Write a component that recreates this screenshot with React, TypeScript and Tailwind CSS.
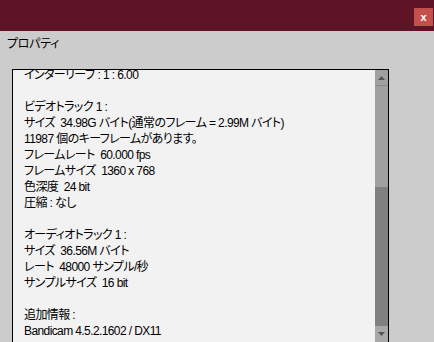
import React from "react";

const lines = [
  "インターリーブ : 1 : 6.00",
  "",
  "ビデオトラック 1 :",
  "サイズ  34.98G バイト(通常のフレーム = 2.99M バイト)",
  "11987 個のキーフレームがあります。",
  "フレームレート  60.000 fps",
  "フレームサイズ  1360 x 768",
  "色深度  24 bit",
  "圧縮 : なし",
  "",
  "オーディオトラック 1 :",
  "サイズ  36.56M バイト",
  "レート  48000 サンプル/秒",
  "サンプルサイズ  16 bit",
  "",
  "追加情報 :",
  "Bandicam 4.5.2.1602 / DX11",
];

export default function App() {
  return (
    <div
      className="w-[434px] h-[342px] overflow-hidden bg-[#cccccc] flex flex-col [font-feature-settings:'palt']"
      style={{ fontFamily: '"Liberation Sans", "Noto Sans CJK JP", sans-serif' }}
    >
      <div className="h-[31px] bg-[#5e1426] flex items-start justify-end pt-[8px] pr-[1px] shrink-0">
        <div className="w-[19px] h-[18px] bg-[#c4504e] flex items-center justify-center text-white text-[11px] font-bold leading-none">
          x
        </div>
      </div>
      <div className="pl-[7px] pt-[5px] h-[38px] text-[12px] leading-[16px] text-black tracking-[-0.3px] shrink-0">
        プロパティ
      </div>
      <div className="ml-[12px] w-[377px] flex-1 border-t border-l border-r border-black bg-[#f2f2f2] flex overflow-hidden">
        <div className="flex-1 overflow-hidden pl-[11px]">
          <div className="-mt-[3px] text-[12px] leading-[16px] text-black whitespace-pre tracking-[-0.6px]">
            {lines.map((l, i) => (
              <div key={i} className="h-[16px]">
                {l}
              </div>
            ))}
          </div>
        </div>
        <div className="w-[13px] flex flex-col bg-[#a0a0a0]">
          <div className="h-[16px] border-b border-[#888] flex items-center justify-center">
            <svg width="7" height="4" viewBox="0 0 7 4">
              <polygon points="3.5,0 7,4 0,4" fill="#555" />
            </svg>
          </div>
          <div className="h-[101px]" />
          <div className="h-[139px] bg-[#808080]" />
          <div className="h-[16px] flex items-center justify-center bg-[#a8a8a8]">
            <svg width="7" height="4" viewBox="0 0 7 4">
              <polygon points="0,0 7,0 3.5,4" fill="#555" />
            </svg>
          </div>
        </div>
      </div>
    </div>
  );
}
